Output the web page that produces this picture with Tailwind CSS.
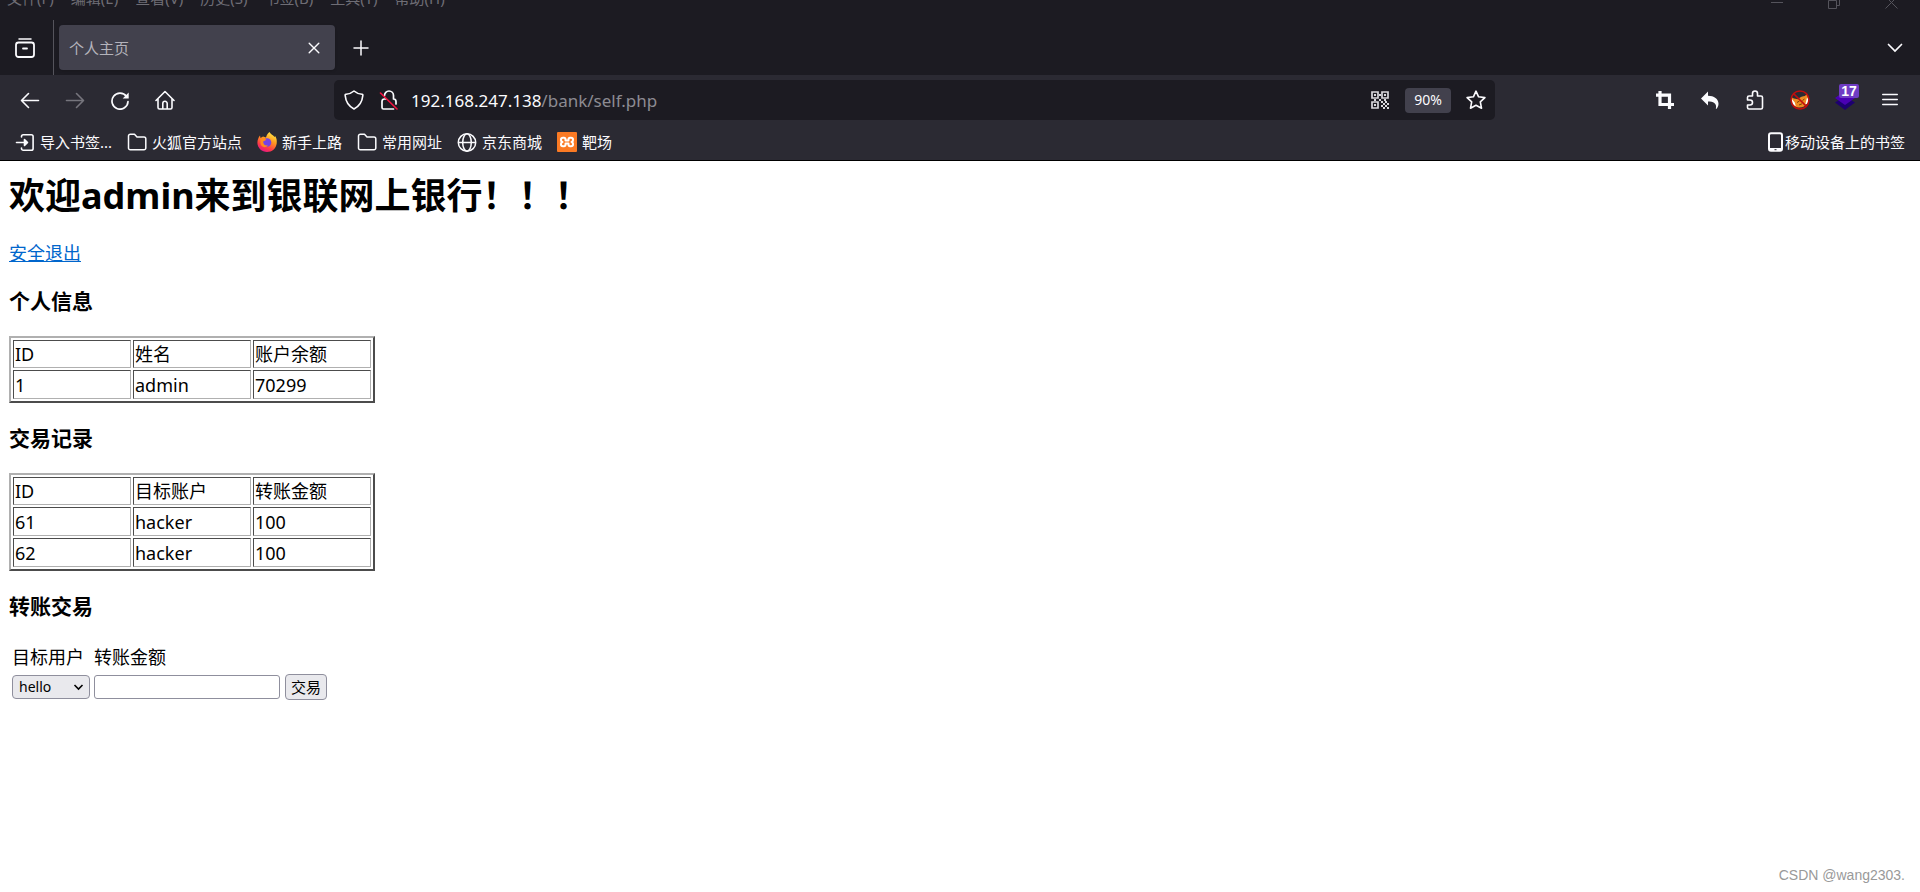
<!DOCTYPE html>
<html lang="zh-CN">
<head>
<meta charset="utf-8">
<title>个人主页</title>
<script src="https://cdn.jsdelivr.net/npm/@tailwindcss/browser@4"></script>
</head>
<body class="flex min-h-screen flex-col bg-white font-['Noto_Sans','Noto_Sans_CJK_SC',sans-serif] text-black">
<header class="overflow-hidden border-b border-black bg-[#2b2a33] text-[#fbfbfe]">
  <div class="bg-[#1c1b22]">
    <div class="-mt-3 flex h-8 items-start justify-between pl-[7px] pr-[22px] text-[#6e6d75]">
      <nav class="flex gap-[17px] text-[15px] leading-5 whitespace-nowrap" aria-label="菜单">
        <button>文件(F)</button><button>编辑(E)</button><button>查看(V)</button><button>历史(S)</button><button>书签(B)</button><button>工具(T)</button><button>帮助(H)</button>
      </nav>
      <div class="flex gap-11 pt-2 text-[#55545c]">
        <button aria-label="最小化"><svg class="h-[14px] w-[13px]" viewBox="0 0 13 14" fill="none" stroke="currentColor"><path d="M0 6.500h12"/></svg></button>
        <button aria-label="还原"><svg class="h-[14px] w-[13px]" viewBox="0 0 13 14" fill="none" stroke="currentColor"><path d="M.5 4.500h8v8h-8zM3.500 4V1.500h8v8H9"/></svg></button>
        <button aria-label="关闭"><svg class="h-[14px] w-[13px]" viewBox="0 0 13 14" fill="none" stroke="currentColor"><path d="M.5.5l12 12M12.500.5l-12 12"/></svg></button>
      </div>
    </div>
    <div class="flex h-[55px] items-center pr-[15px]">
      <div class="flex h-full w-[54px] items-center border-r border-[#55545c] pl-[15px]">
        <button aria-label="近期浏览"><svg class="h-5 w-5" viewBox="0 0 20 20" fill="none" stroke="currentColor" stroke-width="1.800" stroke-linecap="round"><path d="M4 1h12" stroke-width="1.500"/><rect x="1" y="4.500" width="18" height="14.500" rx="2.500"/><path d="M8 10.500h4"/></svg></button>
      </div>
      <div class="ml-[5px] flex h-[45px] w-[276px] items-center justify-between rounded bg-[#42414d] pl-[10px] pr-[15px] shadow">
        <span class="text-[15px] leading-5 text-[#b4b3bb]">个人主页</span>
        <button aria-label="关闭标签页"><svg class="h-3 w-3" viewBox="0 0 12 12" fill="none" stroke="currentColor" stroke-width="1.400" stroke-linecap="round"><path d="M1.200 1.200l9.600 9.600M10.800 1.200l-9.600 9.600"/></svg></button>
      </div>
      <button class="ml-[18px]" aria-label="新标签页"><svg class="h-4 w-4" viewBox="0 0 16 16" fill="none" stroke="currentColor" stroke-width="1.500" stroke-linecap="round"><path d="M8 1v14M1 8h14"/></svg></button>
      <button class="ml-auto mr-[2px]" aria-label="列出所有标签页"><svg class="h-4 w-4" viewBox="0 0 16 16" fill="none" stroke="currentColor" stroke-width="1.700" stroke-linecap="round"><path d="M1.500 4.500L8 11l6.500-6.500"/></svg></button>
    </div>
  </div>
  <div class="flex h-[50px] items-center pr-2 pl-[7px]">
    <button class="flex w-[45px] justify-center" aria-label="后退"><svg class="h-5 w-5" viewBox="0 0 20 20" fill="none" stroke="currentColor" stroke-width="1.600" stroke-linecap="round" stroke-linejoin="round"><path d="M18.500 10.500H2M8.500 3.500l-7 7 7 7"/></svg></button>
    <button class="flex w-[45px] justify-center text-[#76757d]" aria-label="前进"><svg class="h-5 w-5" viewBox="0 0 20 20" fill="none" stroke="currentColor" stroke-width="1.600" stroke-linecap="round" stroke-linejoin="round"><path d="M1.500 10.500H18M11.500 3.500l7 7-7 7"/></svg></button>
    <button class="flex w-[45px] justify-center" aria-label="刷新"><svg class="h-5 w-5" viewBox="0 0 20 20" fill="none" stroke="currentColor" stroke-width="1.700" stroke-linecap="round"><path d="M16.500 6.500A8 8 0 1 0 18 11.500"/><path d="M18.700 2.500v6h-6z" fill="currentColor" stroke="none"/></svg></button>
    <button class="flex w-[45px] justify-center" aria-label="主页"><svg class="h-5 w-5" viewBox="0 0 20 20" fill="none" stroke="currentColor" stroke-width="1.600" stroke-linecap="round" stroke-linejoin="round"><path d="M1 10.500L10 1.500l9 9M3 9v8.500a1.500 1.500 0 0 0 1.500 1.500h11a1.500 1.500 0 0 0 1.500-1.500V9M7.800 19v-5.500a2.200 2.200 0 0 1 4.400 0V19"/></svg></button>
    <div class="mx-[147px] flex h-10 flex-1 items-center rounded-[5px] bg-[#1c1b22] pl-[10px] pr-[9px]">
      <svg class="h-5 w-5" viewBox="0 0 20 20" fill="none" stroke="currentColor" stroke-width="1.600" stroke-linejoin="round"><path d="M10 1c2 1.800 4.800 2.900 8 3.200 1 .1.900.8.800 1.500-.6 6.300-3.800 10.800-8.800 13.300C5 16.500 1.800 12 1.200 5.700 1.100 5 1 4.300 2 4.200 5.200 3.900 8 2.800 10 1z"/></svg>
      <svg class="ml-[15px] h-5 w-5" viewBox="0 0 20 20" fill="none" stroke="currentColor" stroke-width="1.700" stroke-linecap="round"><path d="M5.500 5.500C5.500 3 7.500 1 10 1s4.500 2 4.500 4.500V9M14.500 9c1.500 0 2.500 1 2.500 2.500v2.500M14.500 19H4.500A1.500 1.500 0 0 1 3 17.500v-6C3 10 4 9 5.500 9H7"/><path d="M1.500 3l16.500 16" stroke="#f5113f" stroke-width="1.600"/></svg>
      <div class="ml-3 flex-1 pt-px text-[17px] leading-6" role="textbox" aria-label="地址">192.168.247.138<span class="text-[#8c8b92]">/bank/self.php</span></div>
      <button aria-label="二维码"><svg class="h-[18px] w-[18px]" viewBox="0 0 18 18" fill="none" stroke="#d8d8dc" stroke-width="1.700"><path d="M1 1h6v6H1zM11 1h6v6h-6zM1 11h6v6H1z"/><path d="M3 3h2v2H3zM13 3h2v2h-2zM3 13h2v2H3zM8 3h2v2H8zM8 8h2v2H8zM3 8h2v2H3zM10 10h2v2h-2zM12 12h2v2h-2zM14 10h2v2h-2zM16 12h2v2h-2zM10 14h2v2h-2zM14 14h2v2h-2zM12 16h2v2h-2zM16 16h2v2h-2zM13 8h2v2h-2z" fill="#d8d8dc" stroke="none"/></svg></button>
      <button class="ml-4 h-[25px] w-[46px] rounded bg-[#42414d] text-[14px] leading-5">90%</button>
      <button class="ml-[15px]" aria-label="添加书签"><svg class="h-5 w-5" viewBox="0 0 20 20" fill="none" stroke="currentColor" stroke-width="1.600" stroke-linejoin="round"><path d="M10 1.200l2.600 5.600 6.300.8-4.600 4.300 1.200 6.300L10 15.200l-5.500 3 1.200-6.300L1.100 7.600l6.300-.8z"/></svg></button>
    </div>
    <button class="flex w-[45px] justify-center" aria-label="截图"><svg class="h-5 w-5" viewBox="0 0 20 20" fill="none" stroke="currentColor" stroke-width="3.200"><path d="M5 1v13.500h14M1 5.200h13.500V19"/></svg></button>
    <button class="flex w-[45px] justify-center" aria-label="撤销"><svg class="h-5 w-5" viewBox="0 0 20 20" fill="currentColor"><path d="M8 1.500v4.300c6 0 10.500 3 10.500 8 0 2-.8 3.700-2 5-.3.300-.8.100-.6-.4C17.200 13.300 13 11.500 8 11.500V15.500L1 8.500z"/></svg></button>
    <button class="flex w-[45px] justify-center" aria-label="扩展"><svg class="h-5 w-5" viewBox="0 0 20 20" fill="none" stroke="currentColor" stroke-width="1.600" stroke-linejoin="round"><path d="M7.500 6V3.500a2.500 2.500 0 0 1 5 0V6h3.500a1.500 1.500 0 0 1 1.500 1.500v10A1.500 1.500 0 0 1 16 19H4a1.500 1.500 0 0 1-1.500-1.500V15H5a2.500 2.500 0 0 0 0-5H2.500V7.500A1.500 1.500 0 0 1 4 6z"/></svg></button>
    <button class="flex w-[45px] justify-center" aria-label="代理已停用"><svg class="h-5 w-5" viewBox="0 0 20 20"><path d="M1 7l3 1.500 4 .8c2-2.500 5-3.300 7-3.300l2-2.500 1 5c.8 3-1 6.500-4 8-3 1.500-7 1.500-9.500-.5C2.500 14 1.200 10 1 7z" fill="#ee8c22"/><path d="M1.500 8.500l1.300 5.500 3 2.500-1-4zM17 7.500l1.300 2-1 4-2 1z" fill="#fff"/><path d="M7 12.500l2.500-1.500M12.500 10.500l2-1.500M9 15l3-1.200" stroke="#7a3b05"/><circle cx="10" cy="10" r="9" fill="none" stroke="#c00d0d" stroke-width="1.500"/><path d="M3.600 3.600l12.800 12.800" stroke="#c00d0d" stroke-width="1.500"/></svg></button>
    <button class="relative flex w-[45px] justify-center" aria-label="扩展通知"><svg class="h-5 w-5" viewBox="0 0 20 20"><path d="M0 12.500L10 6l10 6.500L10 20z" fill="#1d0070"/><path d="M0 8L10 1l10 7-10 7z" fill="#4a00b4"/></svg><span class="absolute -top-[6px] left-[17px] h-[14px] w-5 rounded-[2px] bg-[#6f3cc4] text-center font-['Liberation_Sans',sans-serif] text-[14px] leading-[14px] font-bold text-white">17</span></button>
    <button class="flex w-[45px] justify-center" aria-label="应用程序菜单"><svg class="h-5 w-5" viewBox="0 0 20 20" fill="none" stroke="currentColor" stroke-width="1.400" stroke-linecap="round"><path d="M2.700 4.500h14.600M2.700 9.500h14.600M2.700 14.500h14.600"/></svg></button>
  </div>
  <nav class="flex h-[35px] items-center gap-[15px] pr-[15px] pb-px pl-[15px] text-[15px] leading-5 whitespace-nowrap" aria-label="书签">
    <a href="#" class="flex items-center gap-[5px]"><svg class="h-5 w-5" viewBox="0 0 20 20" fill="none" stroke="currentColor" stroke-width="1.600" stroke-linecap="round" stroke-linejoin="round"><path d="M6.500 5V4.500A1.800 1.800 0 0 1 8.300 2.700h8A1.800 1.800 0 0 1 18.100 4.500v12a1.800 1.800 0 0 1-1.800 1.800h-8A1.800 1.800 0 0 1 6.500 16.500V16M1.500 10.500H9"/><path d="M9.500 7.500L12.500 10.500l-3 3z" fill="currentColor"/></svg><span class="w-[72px]">导入书签...</span></a>
    <a href="#" class="flex items-center gap-[5px]"><svg class="h-5 w-5" viewBox="0 0 20 20" fill="none" stroke="currentColor" stroke-width="1.500" stroke-linejoin="round"><path d="M1.500 16V4A1.800 1.800 0 0 1 3.300 2.200h4.200L10 5h7a1.800 1.800 0 0 1 1.800 1.800V16a1.800 1.800 0 0 1-1.800 1.800H3.300A1.800 1.800 0 0 1 1.500 16z"/></svg>火狐官方站点</a>
    <a href="#" class="flex items-center gap-[5px]"><svg class="h-5 w-5" viewBox="0 0 20 20"><defs><linearGradient id="flame" x1=".8" y1="0" x2=".3" y2="1"><stop offset="0" stop-color="#fff04a"/><stop offset=".4" stop-color="#ff9a1f"/><stop offset=".75" stop-color="#ff3b47"/><stop offset="1" stop-color="#e31587"/></linearGradient></defs><path d="M12.500 0c1 2 4 3.500 5 5 .5-.3.500-1 .3-1.500 2 2.500 2.200 5 1.900 8C19 16.500 15 20 10 20S.5 16 .4 11c0-3 1-5.500 2.600-7.500L3.500 6 6 4.500c1 .2 2 .5 3 1C9.500 3 11 1 12.500 0z" fill="url(#flame)"/><circle cx="10" cy="10.500" r="4.300" fill="#7542e5"/><path d="M3.500 7c2-1.500 4.500-.8 6 1-1.500.3-2 1-3.300 1.500C6 12 8 14 11 13.500c-3 3.500-7.500 1-7.500-2.500z" fill="#ff8a1c"/></svg>新手上路</a>
    <a href="#" class="flex items-center gap-[5px]"><svg class="h-5 w-5" viewBox="0 0 20 20" fill="none" stroke="currentColor" stroke-width="1.500" stroke-linejoin="round"><path d="M1.500 16V4A1.800 1.800 0 0 1 3.300 2.200h4.200L10 5h7a1.800 1.800 0 0 1 1.800 1.800V16a1.800 1.800 0 0 1-1.800 1.800H3.300A1.800 1.800 0 0 1 1.500 16z"/></svg>常用网址</a>
    <a href="#" class="flex items-center gap-[5px]"><svg class="h-5 w-5" viewBox="0 0 20 20" fill="none" stroke="currentColor" stroke-width="1.500"><circle cx="10" cy="10.500" r="8.700"/><ellipse cx="10" cy="10.500" rx="4.300" ry="8.700"/><path d="M1.500 10.500h17"/></svg>京东商城</a>
    <a href="#" class="flex items-center gap-[5px]"><svg class="h-5 w-5" viewBox="0 0 20 20"><rect width="20" height="20" rx="1" fill="#fb7a24"/><path d="M8.500 8.500V7.500Q8.500 5.700 7 5.700H6Q4 5.700 4 7.500 4 9.800 5.500 10 4 10.200 4 12.500 4 14.300 6 14.300H7Q8.500 14.300 8.500 12.500V11.500H11.500V12.500Q11.500 14.300 13 14.300H14Q16 14.300 16 12.500 16 10.200 14.500 10 16 9.800 16 7.500 16 5.700 14 5.700H13Q11.500 5.700 11.500 7.500V8.500z" fill="none" stroke="#fff" stroke-width="2" stroke-linejoin="round"/></svg>靶场</a>
    <a href="#" class="ml-auto flex items-center"><svg class="h-5 w-[18px]" viewBox="0 0 18 20"><rect x="2" y="1.200" width="13" height="17.600" rx="2" fill="none" stroke="currentColor" stroke-width="2"/><path d="M2.500 16h12v3h-12z" fill="currentColor"/><path d="M7.500 17.700h2" stroke="#2b2a33"/></svg>移动设备上的书签</a>
  </nav>
</header>
<main class="flex flex-1 flex-col items-start px-[9px] pt-[11px] text-[18px] leading-6">
  <h1 class="text-4xl leading-12 font-bold">欢迎admin来到银联网上银行！！！</h1>
  <a href="#" class="mt-[21px] text-[#0066cc] underline">安全退出</a>
  <h3 class="mt-[22px] mb-[21px] text-[21px] leading-7 font-bold">个人信息</h3>
  <table class="table-fixed border-separate border-spacing-[2px] border-2 border-t-[#b0b0b0] border-r-[#4c4c4c] border-b-[#4c4c4c] border-l-[#b0b0b0] [&_td]:w-[118px] [&_td]:border [&_td]:border-t-[#4c4c4c] [&_td]:border-r-[#b0b0b0] [&_td]:border-b-[#b0b0b0] [&_td]:border-l-[#4c4c4c] [&_td]:p-px">
    <tr class="h-7"><td>ID</td><td>姓名</td><td>账户余额</td></tr>
    <tr class="h-[29px]"><td>1</td><td>admin</td><td>70299</td></tr>
  </table>
  <h3 class="mt-[21px] mb-[21px] text-[21px] leading-7 font-bold">交易记录</h3>
  <table class="table-fixed border-separate border-spacing-[2px] border-2 border-t-[#b0b0b0] border-r-[#4c4c4c] border-b-[#4c4c4c] border-l-[#b0b0b0] [&_td]:w-[118px] [&_td]:border [&_td]:border-t-[#4c4c4c] [&_td]:border-r-[#b0b0b0] [&_td]:border-b-[#b0b0b0] [&_td]:border-l-[#4c4c4c] [&_td]:p-px">
    <tr class="h-7"><td>ID</td><td>目标账户</td><td>转账金额</td></tr>
    <tr class="h-[29px]"><td>61</td><td>hacker</td><td>100</td></tr>
    <tr class="h-[29px]"><td>62</td><td>hacker</td><td>100</td></tr>
  </table>
  <h3 class="mt-[21px] mb-[21px] text-[21px] leading-7 font-bold">转账交易</h3>
  <form class="grid grid-cols-[78px_186px_43px] items-center gap-x-1 gap-y-[5px] px-[3px] pt-1">
    <label for="user">目标用户</label>
    <label for="amount" class="col-span-2">转账金额</label>
    <div class="relative">
      <select id="user" class="block h-6 w-full appearance-none rounded border border-[#8f8f9d] bg-[#e9e9ed] pl-[6px] text-[14px] leading-5"><option>hello</option></select>
      <svg class="pointer-events-none absolute top-[7px] right-[6px] h-[10px] w-[11px]" viewBox="0 0 11 10" fill="none" stroke="#000" stroke-width="1.600"><path d="M1.500 3l4 4 4-4"/></svg>
    </div>
    <input id="amount" type="text" class="h-6 w-full rounded-[3px] border border-[#8f8f9d] bg-white px-1 text-[15px]">
    <button type="button" class="ml-px h-[26px] rounded border border-[#8f8f9d] bg-[#e9e9ed] text-[15px] leading-5">交易</button>
  </form>
  <p class="mt-auto mr-[6px] mb-[7px] self-end font-['Liberation_Sans',sans-serif] text-[14px] leading-5 text-[#999999]">CSDN @wang2303.</p>
</main>
</body>
</html>
